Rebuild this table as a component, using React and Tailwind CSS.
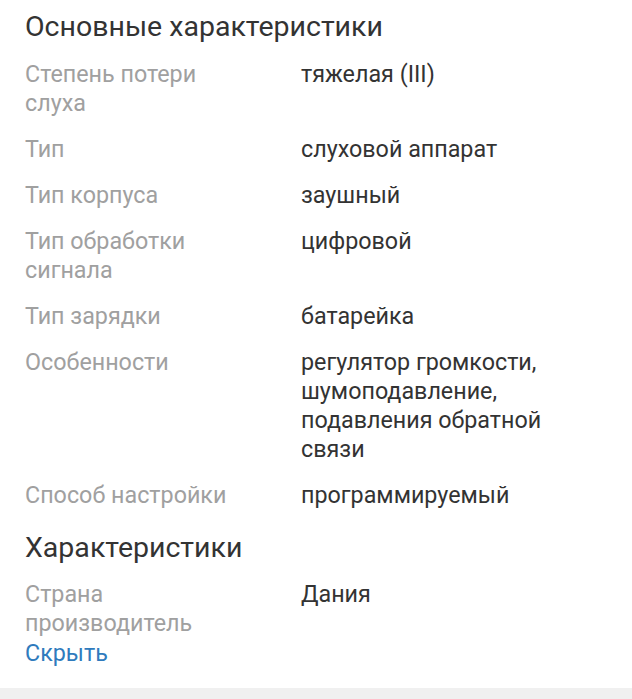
const main = [
  { label: "Степень потери слуха", value: "тяжелая (III)" },
  { label: "Тип", value: "слуховой аппарат" },
  { label: "Тип корпуса", value: "заушный" },
  { label: "Тип обработки сигнала", value: "цифровой" },
  { label: "Тип зарядки", value: "батарейка" },
  {
    label: "Особенности",
    value: "регулятор громкости, шумоподавление, подавления обратной связи",
  },
  { label: "Способ настройки", value: "программируемый" },
];

const extra = [{ label: "Страна производитель", value: "Дания" }];

function Row({ label, value, last }) {
  return (
    <div className={last ? "flex pt-[10px]" : "flex pt-[9px] pb-[8px]"}>
      <div className="w-[276px] shrink-0 pr-[50px] text-[#a0a0a0]">{label}</div>
      <div className="flex-1 text-[#333333]">{value}</div>
    </div>
  );
}

export default function App() {
  return (
    <div
      className="min-h-[699px] flex flex-col bg-white text-[23.3px] leading-[29px]"
      style={{ fontFamily: "Roboto, 'Noto Sans', sans-serif" }}
    >
      <div className="flex-1 pl-[25px] pr-[60px]">
        <h2 className="text-[28.5px] leading-[34px] pt-[10px] pb-[7px] text-[#333333]">
          Основные характеристики
        </h2>
        {main.map((r) => (
          <Row key={r.label} {...r} />
        ))}
        <h2 className="text-[28.5px] leading-[34px] pt-[13px] pb-[5px] text-[#333333]">
          Характеристики
        </h2>
        {extra.map((r) => (
          <Row key={r.label} {...r} last />
        ))}
        <a href="#" className="block text-[#2f7bbd] pt-[1px]">
          Скрыть
        </a>
      </div>
      <div className="h-[11px] bg-[#f0f0f0]" />
    </div>
  );
}
